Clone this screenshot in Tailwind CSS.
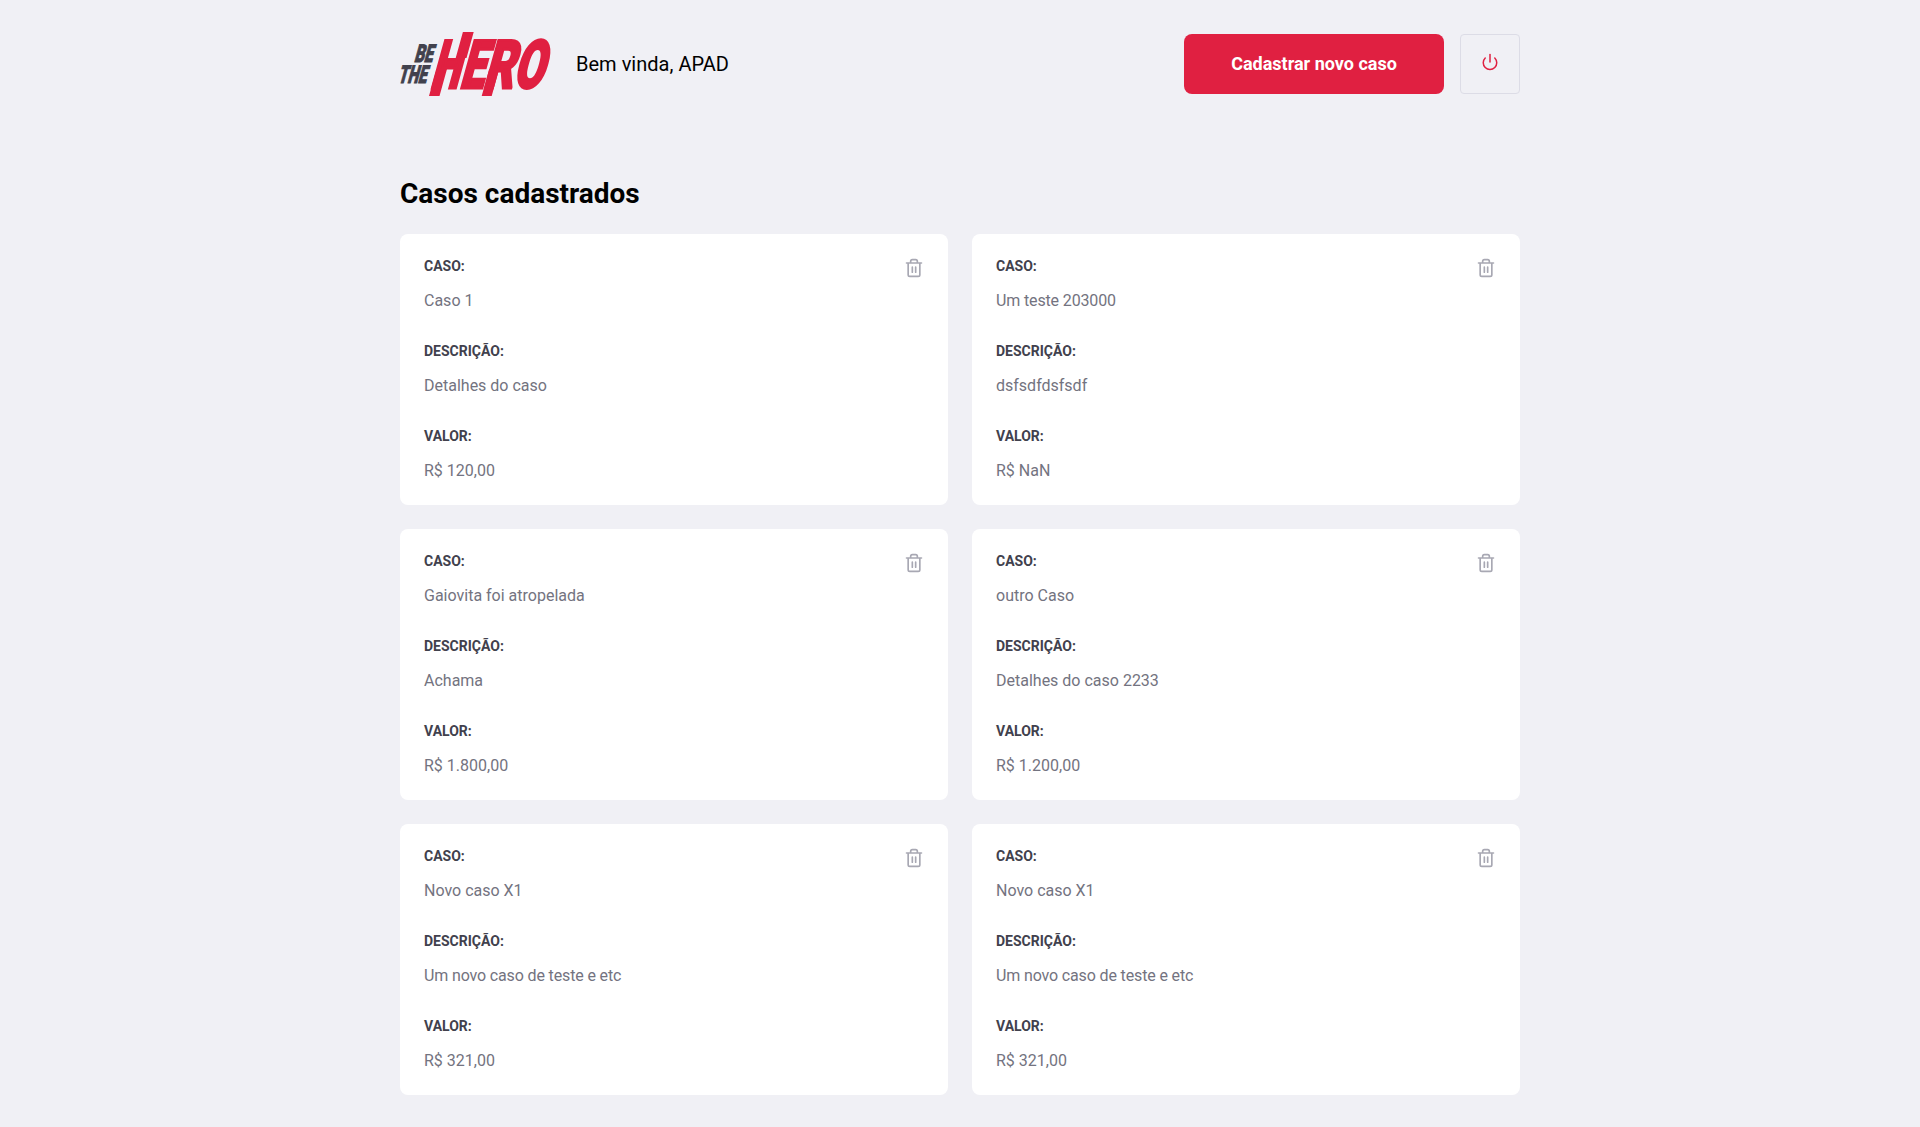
<!DOCTYPE html>
<html lang="pt-BR">
<head>
<meta charset="utf-8">
<title>Be The Hero</title>
<script src="https://cdn.jsdelivr.net/npm/@tailwindcss/browser@4"></script>
</head>
<body class="bg-[#f0f0f5] font-[Roboto,sans-serif] antialiased">
<div class="mx-auto mt-8 w-[1120px]">
  <header class="flex h-16 items-center">
    <svg class="h-16 w-[152px] overflow-visible" viewBox="0 0 152 64" role="img" aria-label="Be The Hero" font-family="Roboto, sans-serif" font-weight="900">
      <g fill="#41414d" stroke="#41414d" stroke-width="1" font-size="24.5">
        <text transform="translate(13.7 30) skewX(-15.5)" textLength="18.5" lengthAdjust="spacingAndGlyphs">BE</text>
        <text transform="translate(-2.5 51) skewX(-15.5)" textLength="28.5" lengthAdjust="spacingAndGlyphs">THE</text>
      </g>
      <g fill="#e02041" stroke="#e02041" stroke-width="2.8" font-size="67">
        <text transform="translate(29.5 55.5) skewX(-15.5)" textLength="28.8" lengthAdjust="spacingAndGlyphs">H</text>
        <text transform="translate(58.8 55.5) skewX(-15.5)" textLength="24.4" lengthAdjust="spacingAndGlyphs">E</text>
        <text transform="translate(82.4 55.5) skewX(-15.5)" textLength="30" lengthAdjust="spacingAndGlyphs">R</text>
        <text transform="translate(112.2 55.5) skewX(-15.5)" textLength="30" lengthAdjust="spacingAndGlyphs">O</text>
      </g>
      <!-- blade-like extensions of the strokes -->
      <path fill="#e02041" d="M36.6 37H47L39.5 64H29zM62.9 0h10.8l-7.2 26H55.7zM89.2 37h10l-7.5 27h-10z"/>
    </svg>
    <span class="ml-6 text-xl tracking-[0.02px]">Bem vinda, APAD</span>
    <a class="ml-auto flex h-[60px] w-[260px] items-center justify-center rounded-lg bg-[#e02041] text-lg font-bold text-white">Cadastrar novo caso</a>
    <button class="ml-4 flex h-[60px] w-[60px] items-center justify-center rounded border border-[#dcdce6] pb-1">
      <svg class="size-[18px]" viewBox="0 0 24 24" fill="none" stroke="#e02041" stroke-width="2" stroke-linecap="round" stroke-linejoin="round"><path d="M18.36 6.64a9 9 0 1 1-12.73 0"/><path d="M12 2v10"/></svg>
    </button>
  </header>
  <h1 class="mt-[81px] mb-[23px] text-[28px] leading-[34px] font-bold">Casos cadastrados</h1>
  <ul id="cases" class="grid grid-cols-2 gap-6"></ul>
</div>
<template id="case">
  <li class="flex h-[271px] justify-between rounded-lg bg-white p-6">
    <dl class="text-base leading-[21px] text-[#737380]">
      <dt class="mb-4 text-sm leading-4 font-bold text-[#41414d]">CASO:</dt><dd class="mb-8"></dd>
      <dt class="mb-4 text-sm leading-4 font-bold text-[#41414d]">DESCRIÇÃO:</dt><dd class="mb-8"></dd>
      <dt class="mb-4 text-sm leading-4 font-bold text-[#41414d]">VALOR:</dt><dd></dd>
    </dl>
    <svg class="size-5" viewBox="0 0 24 24" fill="none" stroke="#a8a8b3" stroke-width="2" stroke-linecap="round" stroke-linejoin="round"><path d="M3 6h18M19 6v14a2 2 0 0 1-2 2H7a2 2 0 0 1-2-2V6m3 0V4a2 2 0 0 1 2-2h4a2 2 0 0 1 2 2v2M10 11v6M14 11v6"/></svg>
  </li>
</template>
<script>
const cases = [
  ['Caso 1','Detalhes do caso','R$ 120,00'],
  ['Um teste 203000','dsfsdfdsfsdf','R$ NaN'],
  ['Gaiovita foi atropelada','Achama','R$ 1.800,00'],
  ['outro Caso','Detalhes do caso 2233','R$ 1.200,00'],
  ['Novo caso X1','Um novo caso de teste e etc','R$ 321,00'],
  ['Novo caso X1','Um novo caso de teste e etc','R$ 321,00'],
];
for (const c of cases) {
  const n = document.getElementById('case').content.cloneNode(true);
  n.querySelectorAll('dd').forEach((d, i) => {
    d.textContent = c[i];
    if (c[i].startsWith('Um ')) d.classList.add('tracking-[-0.14px]');
  });
  document.getElementById('cases').append(n);
}
</script>
</body>
</html>
